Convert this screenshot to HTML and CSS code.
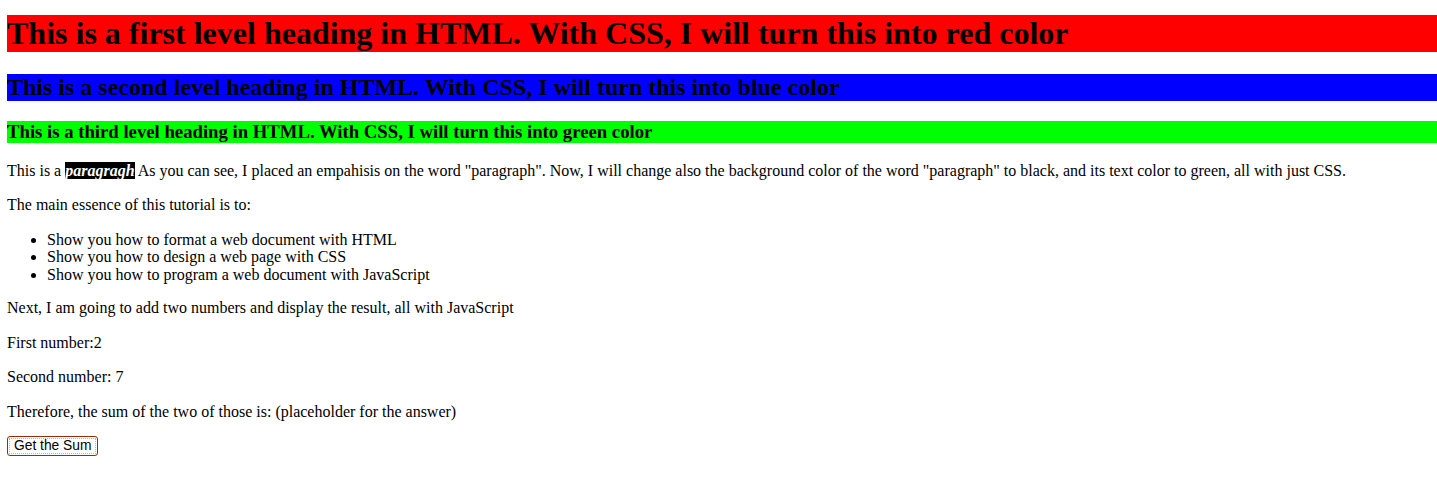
FILE: index.html
```html
<!DOCTYPE html>
<html>
<head>
<meta charset="utf-8">
<title>Tutorial</title>
<link rel="stylesheet" href="styles.css">
</head>
<body>
<h1 class="h-red">This is a first level heading in HTML. With CSS, I will turn this into red color</h1>
<h2 class="h-blue">This is a second level heading in HTML. With CSS, I will turn this into blue color</h2>
<h3 class="h-green">This is a third level heading in HTML. With CSS, I will turn this into green color</h3>
<p>This is a <em class="hl">paragragh</em> As you can see, I placed an empahisis on the word "paragraph". Now, I will change also the background color of the word "paragraph" to black, and its text color to green, all with just CSS.</p>
<p>The main essence of this tutorial is to:</p>
<ul class="list">
<li>Show you how to format a web document with HTML</li>
<li>Show you how to design a web page with CSS</li>
<li>Show you how to program a web document with JavaScript</li>
</ul>
<p>Next, I am going to add two numbers and display the result, all with JavaScript</p>
<p>First number:2</p>
<p>Second number: 7</p>
<p class="last">Therefore, the sum of the two of those is: (placeholder for the answer)</p>
<button class="btn" type="button">Get the Sum</button>
</body>
</html>
```

FILE: styles.css
```css
html, body {
  background: #fff;
}
body {
  margin: 0 0 0 7px;
  padding-top: 1px;
  font-family: "Liberation Serif", "Times New Roman", serif;
  font-size: 16px;
  color: #000;
}
h1, h2, h3 {
  font-weight: bold;
  color: #000;
}
.h-red {
  background: #ff0000;
  font-size: 32px;
  line-height: 37px;
  margin: 14px 0 22px;
}
.h-blue {
  background: #0000ff;
  font-size: 24px;
  line-height: 27px;
  margin: 0 0 20px;
}
.h-green {
  background: #00ff00;
  font-size: 18.72px;
  line-height: 22px;
  margin: 0 0 18.7px;
}
p {
  margin: 16px 0;
  line-height: 18.4px;
}
p.last {
  margin-bottom: 15px;
}
.hl {
  background: #000;
  color: #fff;
  font-style: italic;
  font-weight: bold;
}
.list {
  margin: 15px 0 16px;
  padding-left: 40px;
  line-height: 17.6px;
}
.btn {
  font-family: "Liberation Sans", Arial, sans-serif;
  font-size: 13.8px;
  color: #000;
  background: #fff;
  border: 1px solid #9c2a00;
  border-radius: 3px;
  padding: 1px 6px;
  height: 20px;
  outline: 1px dotted #7fc6ee;
  outline-offset: -3px;
}
```
